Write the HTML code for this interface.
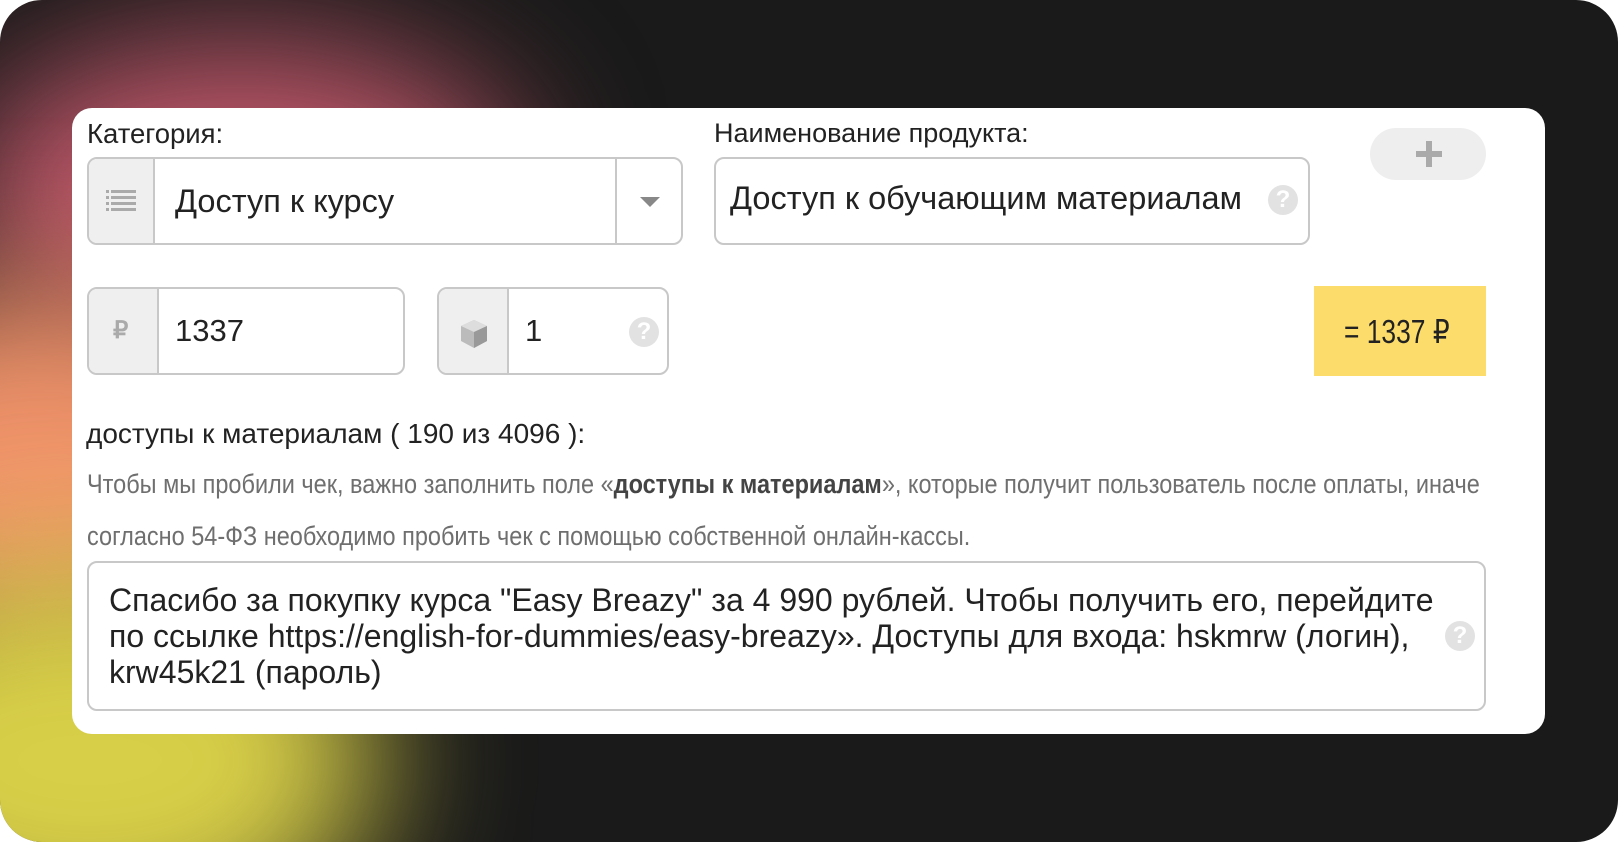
<!DOCTYPE html>
<html style="overflow:hidden"><head><meta charset="utf-8"><style>
*{margin:0;padding:0;box-sizing:border-box}
html,body{width:1618px;height:842px;overflow:hidden}
body{background:#fff;font-family:"Liberation Sans",sans-serif;color:#222;position:relative}
.bg{position:absolute;left:0;top:0;width:1618px;height:842px;border-radius:42px;overflow:hidden;background:#1a1a1a}
.g{position:absolute;border-radius:50%;filter:blur(70px)}
.card{position:absolute;left:72px;top:108px;width:1473px;height:626px;background:#fff;border-radius:20px}
.abs{position:absolute}
.lbl{font-size:27px;color:#222;white-space:nowrap}
.box{position:absolute;border:2px solid #c8c8c8;border-radius:10px;background:#fff;overflow:hidden}
.ic{position:absolute;left:0;top:0;bottom:0;background:#efefef;border-right:2px solid #c8c8c8}
.q{position:absolute;width:30px;height:30px;border-radius:50%;background:#e2e2e2;color:#fff;font-weight:bold;font-size:24px;text-align:center;line-height:30px}
.narrow{display:inline-block;transform-origin:0 0;white-space:nowrap}
.clip{overflow:hidden;width:1400px}
</style></head><body>
<div class="bg">
 <div class="g" style="left:-40px;top:40px;width:560px;height:300px;background:#c0576a"></div>
 <div class="g" style="left:-220px;top:280px;width:520px;height:380px;background:#f0936a"></div>
 <div class="g" style="left:-200px;top:560px;width:580px;height:400px;background:#d8cf48"></div>
</div>
<div class="card"></div>

<div class="abs lbl" style="left:87px;top:118px;font-size:27.5px">Категория:</div>
<div class="abs lbl" style="left:714px;top:118px">Наименование продукта:</div>

<div class="box" style="left:87px;top:157px;width:596px;height:88px">
 <div class="ic" style="width:66px">
  <svg width="30" height="24" style="position:absolute;left:17px;top:30px"><g fill="#aaa"><rect x="0" y="1" width="3" height="3"/><rect x="5" y="1" width="25" height="3"/><rect x="0" y="7" width="3" height="3"/><rect x="5" y="7" width="25" height="3"/><rect x="0" y="13" width="3" height="3"/><rect x="5" y="13" width="25" height="3"/><rect x="0" y="19" width="3" height="3"/><rect x="5" y="19" width="25" height="3"/></g></svg>
 </div>
 <div class="abs" style="left:86px;top:24px;font-size:32.5px;color:#222">Доступ к курсу</div>
 <div class="abs" style="left:526px;top:0;bottom:0;border-left:2px solid #c8c8c8;width:68px">
  <svg width="20" height="12" style="position:absolute;left:23px;top:38px"><path d="M0 0H20L10 10Z" fill="#888"/></svg>
 </div>
</div>

<div class="box" style="left:714px;top:157px;width:596px;height:88px">
 <div class="abs" style="left:14px;top:21px;font-size:32.5px;color:#222;width:522px;overflow:hidden;white-space:nowrap">Доступ к обучающим материалам онлайн</div>
 <div class="q" style="left:552px;top:26px">?</div>
</div>

<div class="abs" style="left:1370px;top:128px;width:116px;height:52px;border-radius:26px;background:#eeeeee">
 <div class="abs" style="left:46px;top:23px;width:26px;height:6px;background:#aaa"></div>
 <div class="abs" style="left:56px;top:13px;width:6px;height:26px;background:#aaa"></div>
</div>

<div class="box" style="left:87px;top:287px;width:318px;height:88px">
 <div class="ic" style="width:70px"><div class="abs" style="left:24px;top:27px;font-size:24px;color:#aaa;font-weight:bold">₽</div></div>
 <div class="abs" style="left:86px;top:24px;font-size:31px">1337</div>
</div>

<div class="box" style="left:437px;top:287px;width:232px;height:88px">
 <div class="ic" style="width:70px">
  <svg width="28" height="30" style="position:absolute;left:21px;top:30px"><path d="M14 1L27 7V22L14 29L1 22V7Z" fill="#bbb"/><path d="M1 7L14 13L27 7L14 1Z" fill="#ddd"/><path d="M14 13V29L27 22V7Z" fill="#999"/></svg>
 </div>
 <div class="abs" style="left:86px;top:24px;font-size:31px">1</div>
 <div class="q" style="left:190px;top:28px">?</div>
</div>

<div class="abs" style="left:1314px;top:286px;width:172px;height:90px;background:#fcdc6a;overflow:hidden">
 <div class="abs" style="left:30px;top:26px;font-size:33px;color:#222"><span class="narrow" style="transform:scaleX(0.8)">= 1337 ₽</span></div>
</div>

<div class="abs lbl" style="left:86px;top:418px;font-size:28px">доступы к материалам ( 190 из 4096 ):</div>
<div class="abs clip" style="left:87px;top:469px;font-size:27px;color:#6f6f6f"><span class="narrow" style="transform:scaleX(0.87)">Чтобы мы пробили чек, важно заполнить поле «<b style="color:#444">доступы к материалам</b>», которые получит пользователь после оплаты, иначе</span></div>
<div class="abs clip" style="left:87px;top:521px;font-size:27px;color:#6f6f6f"><span class="narrow" style="transform:scaleX(0.87)">согласно 54-ФЗ необходимо пробить чек с помощью собственной онлайн-кассы.</span></div>

<div class="box" style="left:87px;top:561px;width:1399px;height:150px">
 <div class="abs" style="left:20px;top:19px;width:1345px;font-size:32px;line-height:36px;color:#222">Спасибо за покупку курса "Easy Breazy" за 4 990 рублей. Чтобы получить его, перейдите по ссылке https://english-for-dummies/easy-breazy». Доступы для входа: hskmrw (логин), krw45k21 (пароль)</div>
 <div class="q" style="left:1356px;top:58px">?</div>
</div>
</body></html>
